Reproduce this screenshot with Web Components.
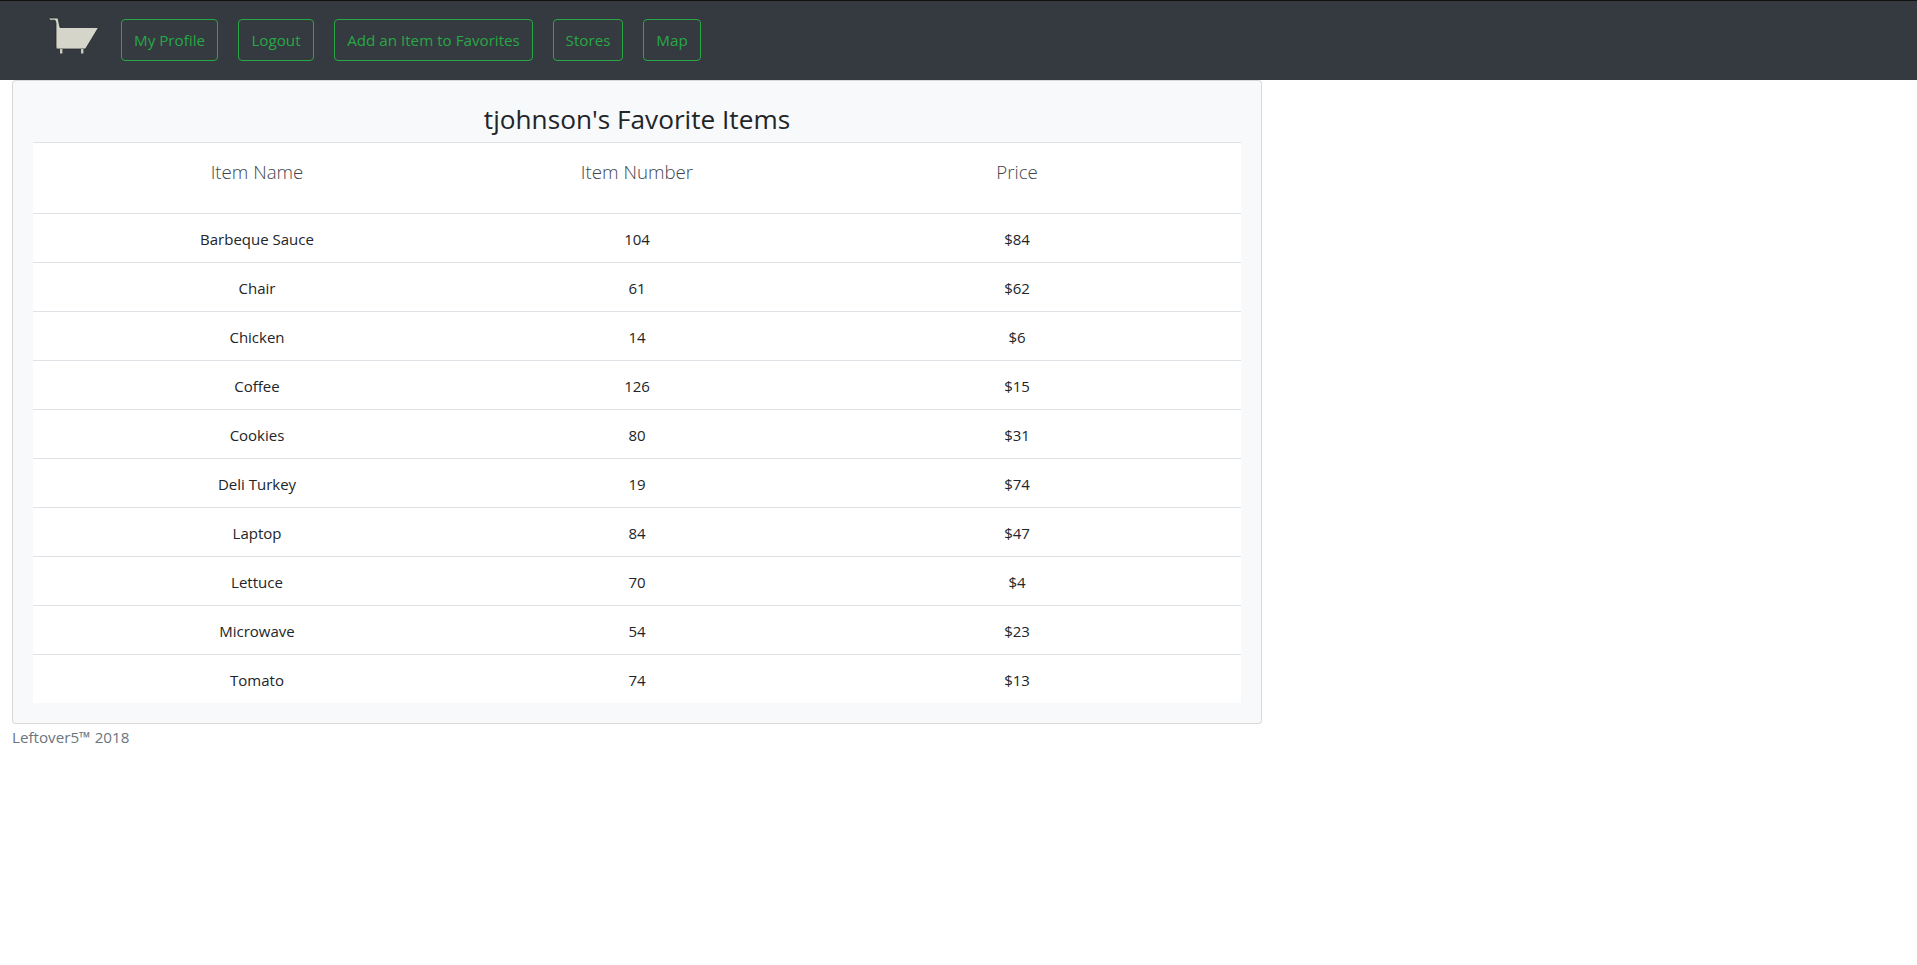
<!DOCTYPE html>
<html lang="en">
<head>
<meta charset="utf-8">
<title>Favorite Items</title>
<style>
  html, body { margin: 0; background: #fff; }
  body { font-family: "Open Sans", "Noto Sans", "Liberation Sans", sans-serif; color: #212529; }
</style>
</head>
<body>
<left-navbar>
  <nav-button style="width:97px">My Profile</nav-button>
  <nav-button style="width:76px">Logout</nav-button>
  <nav-button style="width:199px">Add an Item to Favorites</nav-button>
  <nav-button style="width:70px">Stores</nav-button>
  <nav-button style="width:58px">Map</nav-button>
</left-navbar>
<favorites-card heading="tjohnson's Favorite Items">
  <fav-row head name="Item Name" number="Item Number" price="Price"></fav-row>
  <fav-row name="Barbeque Sauce" number="104" price="$84"></fav-row>
  <fav-row name="Chair" number="61" price="$62"></fav-row>
  <fav-row name="Chicken" number="14" price="$6"></fav-row>
  <fav-row name="Coffee" number="126" price="$15"></fav-row>
  <fav-row name="Cookies" number="80" price="$31"></fav-row>
  <fav-row name="Deli Turkey" number="19" price="$74"></fav-row>
  <fav-row name="Laptop" number="84" price="$47"></fav-row>
  <fav-row name="Lettuce" number="70" price="$4"></fav-row>
  <fav-row name="Microwave" number="54" price="$23"></fav-row>
  <fav-row name="Tomato" number="74" price="$13"></fav-row>
</favorites-card>
<site-footer>Leftover5™ 2018</site-footer>

<script>
class LeftNavbar extends HTMLElement {
  constructor() {
    super();
    this.attachShadow({ mode: "open" });
    this.shadowRoot.innerHTML = `
      <style>
        :host {
          display: flex;
          align-items: center;
          box-sizing: border-box;
          height: 80px;
          padding: 0 0 2px 48px;
          background: #343a40;
          border-top: 1px solid #111;
        }
        svg { display: block; width: 52px; height: 38px; margin: -8px 21px 0 0; }
        .links { display: flex; gap: 20px; }
      </style>
      <svg viewBox="0 0 52 38" aria-hidden="true">
        <path d="M0.5 1 H10 L12 10.5 H50.5 L37.5 32 H9 Q8 32 8 30 V6 L7 3.2 H2 Z" fill="#d5d6c9" stroke="#23272b" stroke-width="0.8"/>
        <rect x="12" y="32" width="2.4" height="4.5" fill="#c9cabd"/>
        <rect x="33" y="32" width="2.4" height="4.5" fill="#c9cabd"/>
      </svg>
      <div class="links"><slot></slot></div>
    `;
  }
}
customElements.define('left-navbar', LeftNavbar);

class NavButton extends HTMLElement {
  constructor() {
    super();
    this.attachShadow({ mode: "open" });
    this.shadowRoot.innerHTML = `
      <style>
        :host {
          display: block;
          box-sizing: border-box;
          height: 42px;
          border: 1px solid #28a745;
          border-radius: 4px;
          color: #28a745;
          font-size: 15.2px;
          line-height: 40px;
          text-align: center;
          white-space: nowrap;
          cursor: pointer;
        }
      </style>
      <slot></slot>
    `;
  }
}
customElements.define('nav-button', NavButton);

class FavoritesCard extends HTMLElement {
  constructor() {
    super();
    this.attachShadow({ mode: "open" });
    this.shadowRoot.innerHTML = `
      <style>
        :host {
          display: block;
          box-sizing: border-box;
          width: 1250px;
          margin-left: 12px;
          padding: 0 20px 20px;
          background: #f8f9fa;
          border: 1px solid rgba(0,0,0,.125);
          border-radius: 4px;
        }
        h3 {
          margin: 0;
          height: 61px;
          font-size: 26.2px;
          font-weight: 400;
          line-height: 76px;
          text-align: center;
          color: #212529;
        }
        .table { background: #fff; }
      </style>
      <h3 id="heading"></h3>
      <div class="table"><slot></slot></div>
    `;
    this.shadowRoot.querySelector('#heading').textContent = this.getAttribute('heading');
  }
}
customElements.define('favorites-card', FavoritesCard);

class FavRow extends HTMLElement {
  constructor() {
    super();
    this.attachShadow({ mode: "open" });
    this.shadowRoot.innerHTML = `
      <style>
        :host {
          display: grid;
          grid-template-columns: 448px 312px 448px;
          box-sizing: border-box;
          height: 49px;
          padding-top: 2px;
          border-top: 1px solid #dee2e6;
          font-size: 15px;
          line-height: 46px;
          text-align: center;
          color: #212529;
        }
        :host([head]) {
          height: 71px;
          padding-top: 0;
          font-size: 18.7px;
          font-weight: 300;
          line-height: 57px;
          color: #3f464d;
        }
      </style>
      <div id="name"></div>
      <div id="number"></div>
      <div id="price"></div>
    `;
    ['name', 'number', 'price'].forEach(k => {
      this.shadowRoot.querySelector('#' + k).textContent = this.getAttribute(k);
    });
  }
}
customElements.define('fav-row', FavRow);

class SiteFooter extends HTMLElement {
  constructor() {
    super();
    this.attachShadow({ mode: "open" });
    this.shadowRoot.innerHTML = `
      <style>
        :host {
          display: block;
          margin-left: 12px;
          font-size: 15.2px;
          line-height: 26px;
          color: #6c757d;
        }
      </style>
      <slot></slot>
    `;
  }
}
customElements.define('site-footer', SiteFooter);
</script>
</body>
</html>
